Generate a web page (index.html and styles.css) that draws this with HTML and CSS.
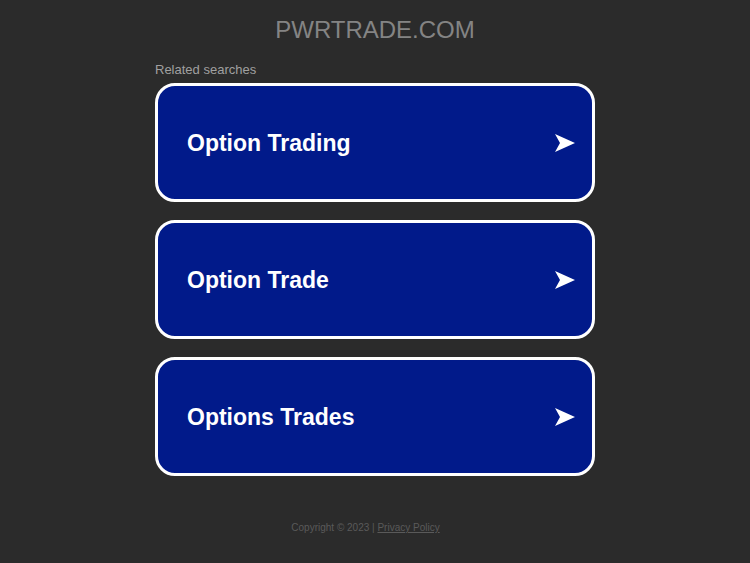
FILE: index.html
```html
<!DOCTYPE html>
<html>
<head>
<meta charset="utf-8">
<link rel="stylesheet" href="styles.css">
</head>
<body>
<div class="page">
  <h1 class="domain">PWRTRADE.COM</h1>
  <div class="wrap">
    <div class="label">Related searches</div>
    <div class="list">
      <a class="card" href="#"><span class="t">Option Trading</span><svg class="arr" width="20" height="18" viewBox="0 0 20 18"><path d="M0 0 L20 9 L0 18 L5 9 Z" fill="#fff"/></svg></a>
      <a class="card" href="#"><span class="t">Option Trade</span><svg class="arr" width="20" height="18" viewBox="0 0 20 18"><path d="M0 0 L20 9 L0 18 L5 9 Z" fill="#fff"/></svg></a>
      <a class="card" href="#"><span class="t">Options Trades</span><svg class="arr" width="20" height="18" viewBox="0 0 20 18"><path d="M0 0 L20 9 L0 18 L5 9 Z" fill="#fff"/></svg></a>
    </div>
  </div>
  <div class="footer">Copyright © 2023 | <a href="#">Privacy Policy</a></div>
</div>
</body>
</html>
```
FILE: styles.css
```css
html, body { margin: 0; padding: 0; }
body { background: #2b2b2b; font-family: "Liberation Sans", Arial, sans-serif; width: 750px; height: 563px; overflow: hidden; }
.page { display: flex; flex-direction: column; align-items: center; }
.domain { margin: 16px 0 0; font-size: 24px; font-weight: normal; color: #848484; line-height: 28px; }
.wrap { width: 440px; margin-top: 18px; }
.label { font-size: 13px; color: #a0a0a0; line-height: 16px; margin-bottom: 5px; }
.list { display: flex; flex-direction: column; gap: 18px; }
.card { display: flex; align-items: center; justify-content: space-between; height: 111px; padding: 2px 17px 0 29px; box-sizing: content-box; border: 3px solid #fff; border-radius: 20px; background: #011a8a; color: #fff; text-decoration: none; }
.t { font-size: 23px; font-weight: bold; }
.arr { display: block; margin-top: -2px; }
.footer { margin-top: 46px; margin-right: 19px; font-size: 10px; color: #5a5a5a; }
.footer a { color: #5a5a5a; }
```
